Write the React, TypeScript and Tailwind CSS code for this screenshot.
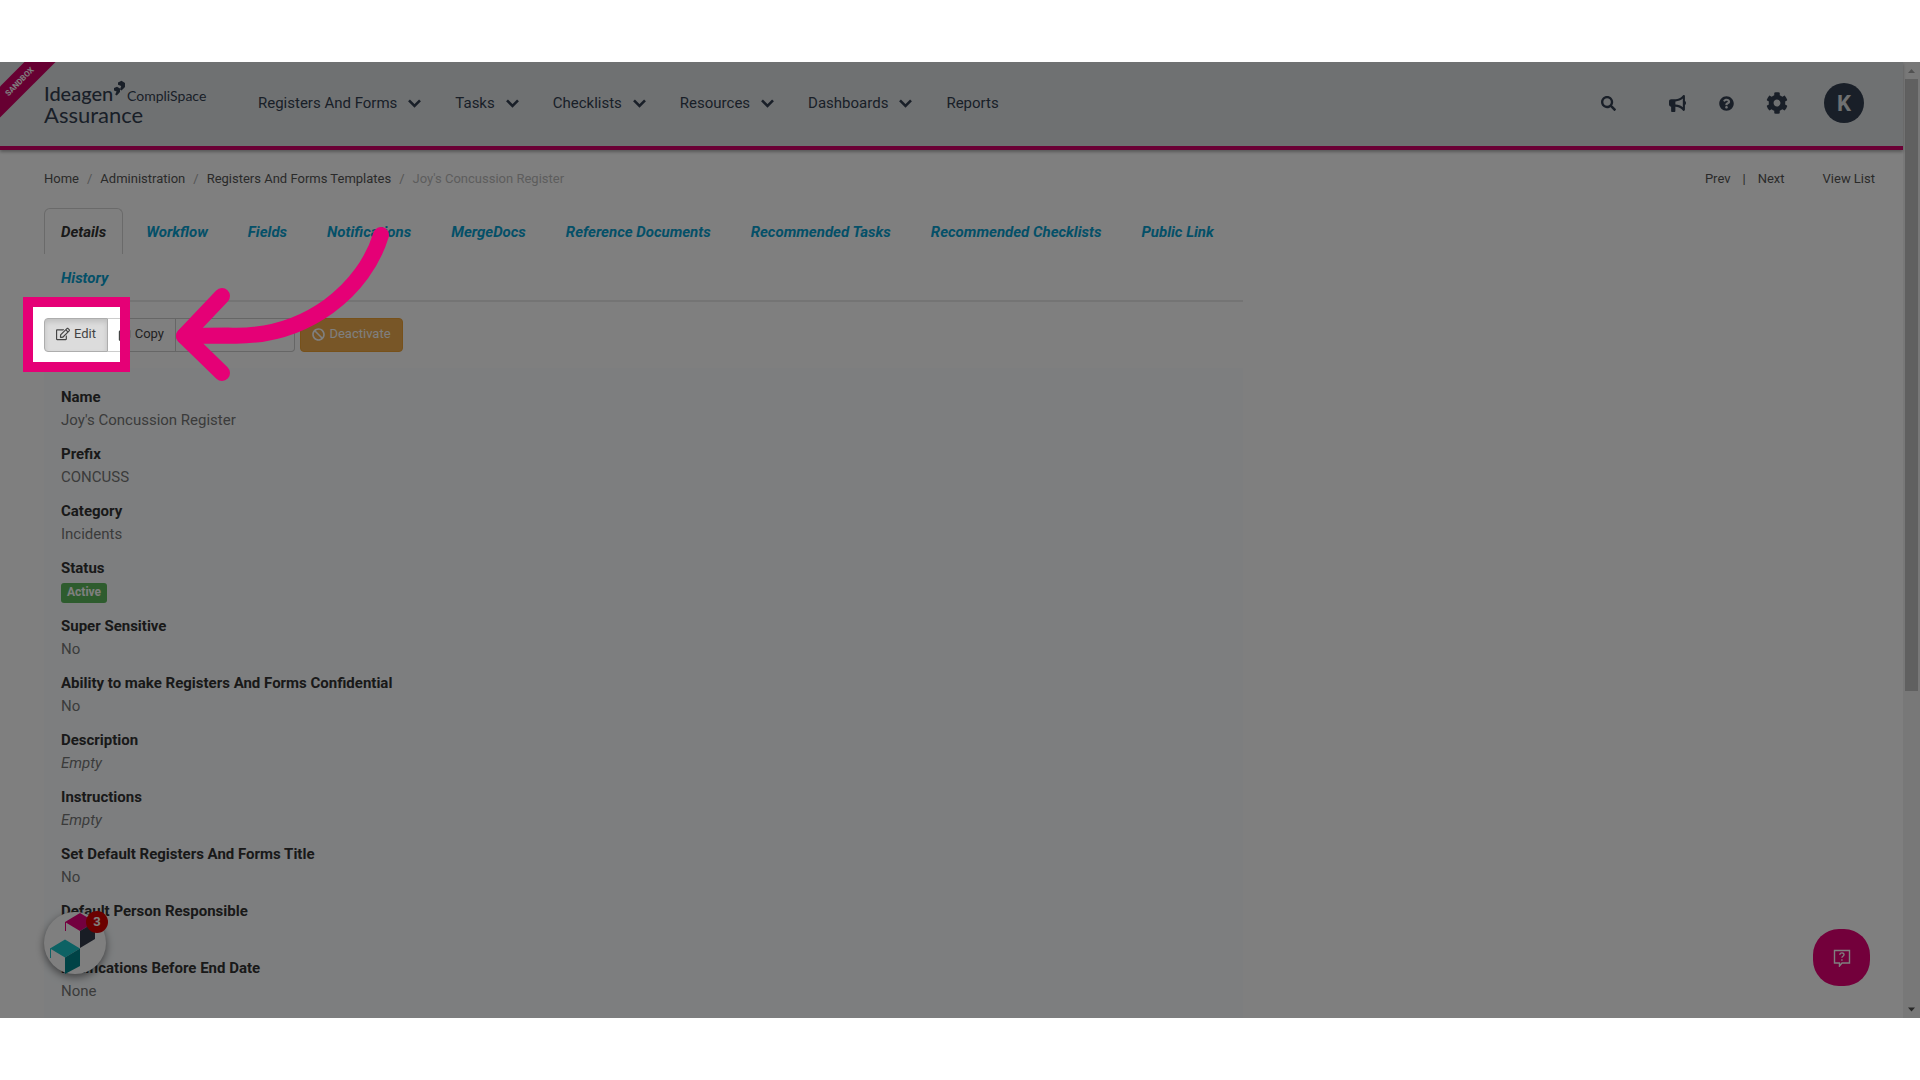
import { FaSearch, FaQuestionCircle, FaCog, FaRegEdit, FaRegCopy, FaBan, FaLock } from "react-icons/fa";
import { FaBullhorn } from "react-icons/fa6";

const menus = ["Registers And Forms", "Tasks", "Checklists", "Resources", "Dashboards"];
const crumbs = ["Home", "Administration", "Registers And Forms Templates"];
const tabs = [
  "Details", "Workflow", "Fields", "Notifications", "MergeDocs", "Reference Documents",
  "Recommended Tasks", "Recommended Checklists", "Public Link", "History",
];
const fields: [string, string][] = [
  ["Name", "Joy's Concussion Register"],
  ["Prefix", "CONCUSS"],
  ["Category", "Incidents"],
  ["Status", "Active"],
  ["Super Sensitive", "No"],
  ["Ability to make Registers And Forms Confidential", "No"],
  ["Description", "Empty"],
  ["Instructions", "Empty"],
  ["Set Default Registers And Forms Title", "No"],
  ["Default Person Responsible", "Empty"],
  ["Notifications Before End Date", "None"],
];

function Chevron() {
  return (
    <svg className="h-[9px] w-[13px]" viewBox="0 0 13 9" fill="none" stroke="currentColor" strokeWidth="2.6" aria-hidden="true">
      <path d="M1 1.3 6.5 7 12 1.3" />
    </svg>
  );
}

function Logo() {
  return (
    <a href="#home" className="relative w-[167px] pt-px font-[Lato] text-[#333f50]">
      <span className="flex h-[21px] items-baseline leading-[21px]">
        <span className="w-[83px] text-xl font-medium leading-[21px]">Ideagen</span>
        <span className="text-sm leading-[21px]">CompliSpace</span>
      </span>
      <span className="block text-[22px] leading-[21px]">Assurance</span>
      <svg className="absolute -top-[2px] left-[69px] h-4 w-3" viewBox="0 0 12 16" fill="currentColor" aria-hidden="true">
        <path d="M5 2.5 8.5.8 12 3v4L8.500 10.500 7 9.500 8.200 6 5 4.800Z" />
        <path d="M1 8 4 6.700 7 8.500v3.600L3.800 15.500 2.200 14.600 3.600 11.500 1 10.400Z" />
      </svg>
    </a>
  );
}

function Header() {
  return (
    <header className="relative flex h-[88px] shrink-0 items-center border-b-4 border-[#d4006a] bg-[#dfe2e5] pr-[39px] pb-[2px] pl-11 text-[#333f50] shadow-[0_2px_3px_rgba(0,0,0,0.3)]">
      <div className="absolute top-0 left-0 size-14 overflow-hidden">
        <div className="absolute top-[9px] -left-[25px] h-[22px] w-[90px] -rotate-45 bg-[#cf0064] text-center text-[8px] font-bold leading-[22px] text-white">
          SANDBOX
        </div>
      </div>
      <Logo />
      <nav className="ml-[47px] flex items-center gap-[34px] text-[15px]">
        {menus.map((m) => (
          <button key={m} type="button" className="flex items-center gap-[11px]">
            {m}
            <Chevron />
          </button>
        ))}
        <a href="#reports">Reports</a>
      </nav>
      <div className="ml-auto flex items-center">
        <button type="button" aria-label="Search"><FaSearch className="size-[15px]" /></button>
        <button type="button" aria-label="Announcements" className="ml-[53px]"><FaBullhorn className="size-[17px]" /></button>
        <button type="button" aria-label="Help" className="ml-[33px]"><FaQuestionCircle className="size-[15px]" /></button>
        <button type="button" aria-label="Settings" className="ml-8"><FaCog className="size-[22px]" /></button>
        <button type="button" aria-label="Account" className="ml-9 size-10 rounded-full bg-[#333f50] text-[22px] font-bold text-[#dfe2e5]">K</button>
      </div>
    </header>
  );
}

function Tabs() {
  return (
    <div role="tablist" className="flex flex-wrap gap-x-[6px] border-b-2 border-[#e8e8e8] text-[15px] font-bold italic text-[#08a0d0]">
      {tabs.map((t, i) => (
        <button
          key={t}
          type="button"
          role="tab"
          aria-selected={i === 0}
          className={
            i === 0
              ? "h-[46px] rounded-t-md border border-b-0 border-[#d4d4d4] px-4 pt-px italic text-[#333]"
              : "h-[46px] px-[17px] pt-[2px] italic"
          }
        >
          {t}
        </button>
      ))}
    </div>
  );
}

function Value({ text }: { text: string }) {
  if (text === "Active") {
    return (
      <dd className="mb-[11px] flex h-6 items-center pt-[2px]">
        <span className="h-5 rounded-[3px] bg-[#5cb85c] px-[6px] text-xs font-bold leading-[18px] text-white">{text}</span>
      </dd>
    );
  }
  return (
    <dd className={text === "Empty" ? "mb-[11px] leading-[23px] italic text-[#777]" : "mb-[11px] leading-[23px] text-[#777]"}>{text}</dd>
  );
}

function Details() {
  return (
    <section className="w-2/3 pr-[11px]">
      <Tabs />
      <div className="mt-4 flex text-[13px] text-[#444]">
        <button type="button" className="flex h-[34px] w-16 items-center justify-center gap-1 rounded-l border border-[#adadad] bg-[#dcdcdc] pb-[2px] shadow-[inset_0_3px_5px_rgba(0,0,0,0.125)]">
          <FaRegEdit className="size-[14px]" />
          Edit
        </button>
        <button type="button" className="flex h-[34px] w-[68px] items-center justify-end gap-1 border-y border-r border-[#ccc] pr-[11px] pb-[2px]">
          <FaRegCopy className="size-[13px]" />
          Copy
        </button>
        <button type="button" className="flex h-[34px] w-[119px] items-center justify-center gap-1 rounded-r border border-l-0 border-[#ccc] pb-[2px]">
          <FaLock className="size-[13px]" />
          Permissions
        </button>
        <button type="button" className="ml-[5px] flex h-[34px] w-[103px] items-center justify-center gap-1 rounded border border-[#eea236] bg-[#f0ad4e] pb-[2px] text-white">
          <FaBan className="size-[13px]" />
          Deactivate
        </button>
      </div>
      <dl className="mt-4 bg-[#fafdff] px-[17px] pt-[18px] pb-6 text-[15px]">
        {fields.map(([k, v]) => (
          <div key={k}>
            <dt className="font-bold leading-[23px] text-[#333]">{k}</dt>
            <Value text={v} />
          </div>
        ))}
      </dl>
    </section>
  );
}

function Assistant() {
  return (
    <button type="button" aria-label="Product updates" className="absolute bottom-11 left-11 size-[62px] rounded-full bg-white shadow-[0_3px_8px_rgba(0,0,0,0.5)]">
      <svg className="size-[62px]" viewBox="0 0 62 62" aria-hidden="true">
        <path d="M21 10 36 1 51 10 36 19Z" fill="#e6007e" />
        <path d="M21.5 10V19" stroke="#e6007e" />
        <path d="M36 19 51 10V27L36 36Z" fill="#333a4a" />
        <path d="M6 36.500 21 27.500 36 36.500 21 45.500Z" fill="#1ac4c8" />
        <path d="M6.500 36.500V46" stroke="#1ac4c8" />
        <path d="M21 45.500 36 36.500V54L21 62Z" fill="#00868c" />
      </svg>
      <span className="absolute -top-px left-[42px] size-[22px] rounded-full bg-[#d80000] text-[13px] font-bold leading-[22px] text-white">3</span>
    </button>
  );
}

function Scrollbar() {
  return (
    <div className="flex w-[17px] shrink-0 flex-col items-center bg-[#f1f1f1]" aria-hidden="true">
      <svg className="size-[17px] shrink-0" viewBox="0 0 17 17"><path d="M5 11 8.500 7 12 11Z" fill="#a3a3a3" /></svg>
      <div className="h-[64%] w-[13px] bg-[#c1c1c1]" />
      <svg className="mt-auto size-[17px] shrink-0" viewBox="0 0 17 17"><path d="M5 6.500 8.500 10.500 12 6.500Z" fill="#505050" /></svg>
    </div>
  );
}

export default function App() {
  return (
    <div className="flex h-screen flex-col bg-white py-[62px] font-['Roboto',sans-serif]">
      <div className="relative flex min-h-0 flex-1 overflow-hidden bg-white">
        <div className="flex min-w-0 flex-1 flex-col">
          <Header />
          <main className="px-11 pt-[18px]">
            <div className="mb-[18px] flex items-center text-[13px] leading-[22px] text-[#555]">
              <nav aria-label="Breadcrumb" className="flex">
                {crumbs.map((c) => (
                  <span key={c}>
                    <a href="#crumb">{c}</a>
                    <span className="px-2 text-[#aaa]">/</span>
                  </span>
                ))}
                <span className="text-[#bbb]">Joy's Concussion Register</span>
              </nav>
              <div className="ml-auto flex">
                <a href="#prev">Prev</a>
                <span className="mx-3">|</span>
                <a href="#next">Next</a>
              </div>
              <a href="#list" className="-mr-4 ml-[38px]">View List</a>
            </div>
            <Details />
          </main>
        </div>
        <Scrollbar />
        <Assistant />
        <button type="button" aria-label="Support" className="absolute right-[50px] bottom-8 grid size-[57px] place-items-center rounded-[26px] bg-[#e60076]">
          <svg className="size-[18px]" viewBox="0 0 18 18" fill="none" stroke="#fff" strokeWidth="1.4" aria-hidden="true">
            <path d="M1.500 1.500h15v12.500H9L6.500 17v-3h-5Z" />
            <path d="M6.800 5.800c.2-2.700 4.400-2.500 4.200 0-.1 1.500-2.100 1.500-2.100 3M8.900 10.300v1.500" />
          </svg>
        </button>
        <div className="pointer-events-none absolute top-[235px] left-[23px] h-[75px] w-[107px] border-[10px] border-[#e50076] shadow-[0_0_0_2400px_rgba(0,0,0,0.5)]" />
        <svg className="pointer-events-none absolute top-0 left-0 h-[400px] w-[500px]" viewBox="0 62 500 400" fill="none" stroke="#e50076" strokeWidth="16" strokeLinecap="round" strokeLinejoin="round" aria-hidden="true">
          <path d="M381 235C365 288 308 339 228 335.500L184 336" />
          <path d="M222 296 184 336 222 373" />
        </svg>
      </div>
    </div>
  );
}
